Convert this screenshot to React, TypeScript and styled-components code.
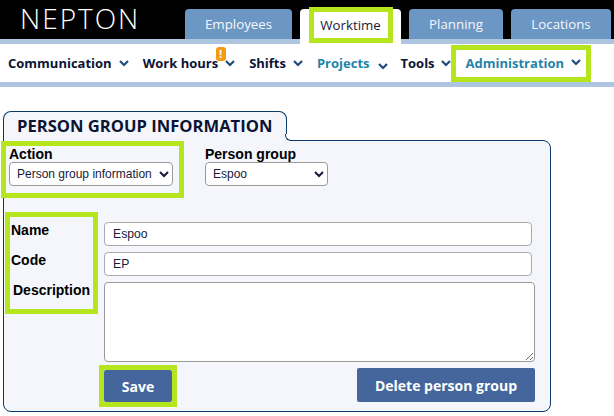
import React from "react";
import styled, { createGlobalStyle } from "styled-components";

const LIME = "#b5e61d";
const PANEL_BG = "#f4f6fb";

const GlobalStyle = createGlobalStyle`
	html, body {
		margin: 0;
		padding: 0;
		background: #fff;
	}
	* {
		box-sizing: border-box;
	}
`;

const Chevron = ({ $drop }: { $drop?: number }) => (
	<ChevronIcon $drop={$drop} viewBox="0 0 10 7" width="10" height="7">
		<polyline points="1,1 5,5 9,1" fill="none" stroke="#1f4b7f" strokeWidth="2.2" />
	</ChevronIcon>
);

const App = () => {
	return (
		<Page>
			<GlobalStyle />
			<Header>
				<Logo>NEPTON</Logo>
				<Tabs>
					<Tab $width={107}>Employees</Tab>
					<ActiveTab>
						<ActiveTabMark>Worktime</ActiveTabMark>
					</ActiveTab>
					<Tab $width={94}>Planning</Tab>
					<Tab $width={100}>Locations</Tab>
				</Tabs>
			</Header>
			<Band />
			<Menu>
				<MenuItem $left={8} $gap={7}>
					Communication
					<Chevron />
				</MenuItem>
				<MenuItem $left={14} $gap={7}>
					Work hours
					<Badge>!</Badge>
					<Chevron />
				</MenuItem>
				<MenuItem $left={14} $gap={7}>
					Shifts
					<Chevron />
				</MenuItem>
				<MenuItem $left={14} $gap={8} $accent>
					Projects
					<Chevron $drop={3} />
				</MenuItem>
				<MenuItem $left={13} $gap={6}>
					Tools
					<Chevron />
				</MenuItem>
				<AdminMark>
					<MenuItem $left={0} $gap={7} $accent>
						Administration
						<Chevron />
					</MenuItem>
				</AdminMark>
			</Menu>
			<Band />
			<Content>
				<PanelTab>PERSON GROUP INFORMATION</PanelTab>
				<Panel>
					<TopRow>
						<ActionMark>
							<FieldLabel>Action</FieldLabel>
							<Select $width={164} defaultValue="info">
								<option value="info">Person group information</option>
							</Select>
						</ActionMark>
						<GroupField>
							<FieldLabel>Person group</FieldLabel>
							<Select $width={123} defaultValue="espoo">
								<option value="espoo">Espoo</option>
							</Select>
						</GroupField>
					</TopRow>
					<FormGrid>
						<LabelMark>
							<FormLabel>Name</FormLabel>
							<FormLabel>Code</FormLabel>
							<FormLabel $indent={2}>Description</FormLabel>
						</LabelMark>
						<Fields>
							<TextInput defaultValue="Espoo" />
							<TextInput defaultValue="EP" />
							<TextArea />
						</Fields>
						<Actions>
							<SaveMark>
								<Button $width={68} $height={32}>
									Save
								</Button>
							</SaveMark>
							<Button $width={178} $height={34} $top={3}>
								Delete person group
							</Button>
						</Actions>
					</FormGrid>
				</Panel>
			</Content>
		</Page>
	);
};

export default App;

const Page = styled.div`
	width: 614px;
	height: 416px;
	overflow: hidden;
	font-family: "Liberation Sans", Arial, sans-serif;
`;

const Header = styled.div`
	position: relative;
	z-index: 1;
	display: flex;
	align-items: flex-end;
	height: 39px;
	background: #000;
`;

const Logo = styled.div`
	align-self: flex-start;
	width: 185px;
	padding-left: 20px;
	font-family: "Open Sans", sans-serif;
	font-weight: 300;
	font-size: 28px;
	line-height: 37px;
	letter-spacing: 2px;
	color: #fff;
`;

const Tabs = styled.div`
	display: flex;
	align-items: flex-end;
	gap: 8px;
`;

const Tab = styled.div<{ $width: number }>`
	display: flex;
	align-items: center;
	justify-content: center;
	width: ${(p) => p.$width}px;
	height: 30px;
	border-radius: 4px 4px 0 0;
	background: #6c96c3;
	color: #f4f8fc;
	font-family: "Open Sans", sans-serif;
	font-size: 13.3px;
`;

const ActiveTab = styled.div`
	display: flex;
	justify-content: center;
	width: 101px;
	height: 35px;
	margin-bottom: -5px;
	border-radius: 4px 4px 0 0;
	background: #fff;
`;

const ActiveTabMark = styled.div`
	display: flex;
	align-items: center;
	justify-content: center;
	width: 84px;
	height: 36px;
	margin-top: -2px;
	border: 5px solid ${LIME};
	color: #1a1a3a;
	font-family: "Open Sans", sans-serif;
	font-size: 13.3px;
`;

const Band = styled.div`
	height: 5px;
	background: #aec5df;
`;

const Menu = styled.div`
	display: flex;
	align-items: center;
	height: 38px;
	background: #fff;
`;

const MenuItem = styled.div<{ $left: number; $gap: number; $accent?: boolean }>`
	position: relative;
	display: flex;
	align-items: center;
	gap: ${(p) => p.$gap}px;
	margin-left: ${(p) => p.$left}px;
	font-family: "Open Sans", sans-serif;
	font-weight: 700;
	font-size: 13px;
	white-space: nowrap;
	color: ${(p) => (p.$accent ? "#1f84a8" : "#0b1433")};
`;

const ChevronIcon = styled.svg<{ $drop?: number }>`
	flex: none;
	margin-top: ${(p) => (p.$drop ? p.$drop * 2 : 0)}px;
`;

const Badge = styled.span`
	position: absolute;
	left: 73px;
	top: -7px;
	width: 10px;
	height: 14px;
	border-radius: 3px;
	background: #f59a13;
	color: #fff;
	font-size: 11px;
	font-weight: 700;
	line-height: 14px;
	text-align: center;
`;

const AdminMark = styled.div`
	display: flex;
	align-items: center;
	width: 140px;
	height: 37px;
	margin-top: 1px;
	padding: 0 0 2px 10px;
	border: 5px solid ${LIME};
`;

const Content = styled.div`
	padding: 24px 0 0 3px;
`;

const PanelTab = styled.div`
	position: relative;
	z-index: 1;
	width: 284px;
	height: 30px;
	margin-bottom: -1px;
	padding: 4px 0 0 13px;
	border: 1px solid #0b3a68;
	border-bottom: none;
	border-radius: 8px 8px 0 0;
	background: ${PANEL_BG};
	color: #0b1433;
	font-family: "Open Sans", sans-serif;
	font-weight: 700;
	font-size: 16.6px;
	line-height: 20px;
	white-space: nowrap;

	&::after {
		content: "";
		position: absolute;
		right: -7px;
		bottom: 0;
		width: 7px;
		height: 6px;
		border-left: 1px solid #0b3a68;
		border-bottom: 1px solid #0b3a68;
		border-radius: 0 0 0 6px;
		background: #fff;
		box-shadow: -3px 3px 0 ${PANEL_BG};
	}
`;

const Panel = styled.div`
	width: 548px;
	height: 272px;
	border: 1px solid #0b3a68;
	border-radius: 0 8px 8px 8px;
	background: ${PANEL_BG};
`;

const TopRow = styled.div`
	display: flex;
	align-items: flex-start;
	margin-left: -3px;
`;

const ActionMark = styled.div`
	position: relative;
	z-index: 2;
	width: 183px;
	height: 57px;
	padding-left: 3px;
	border: 5px solid ${LIME};
`;

const GroupField = styled.div`
	margin-left: 21px;
	padding-top: 5px;
`;

const FieldLabel = styled.div`
	height: 16px;
	font-weight: 700;
	font-size: 14px;
	line-height: 16px;
	color: #000;
`;

const Select = styled.select<{ $width: number }>`
	display: block;
	width: ${(p) => p.$width}px;
	height: 24px;
	border: 1px solid #999;
	border-radius: 4px;
	background: #fff;
	color: #1a1a3a;
	padding-left: 3px;
	font-family: "Liberation Sans", Arial, sans-serif;
	font-size: 12px;
`;

const FormGrid = styled.div`
	display: grid;
	grid-template-columns: 100px 431px;
	margin-top: 14px;
`;

const LabelMark = styled.div`
	position: relative;
	z-index: 2;
	width: 93px;
	height: 102px;
	margin-left: 1px;
	padding-top: 5px;
	border: 5px solid ${LIME};
`;

const FormLabel = styled.div<{ $indent?: number }>`
	height: 30px;
	margin-left: ${(p) => p.$indent ?? 0}px;
	padding-left: 1px;
	font-weight: 700;
	font-size: 14px;
	line-height: 16px;
	color: #000;
`;

const Fields = styled.div`
	display: flex;
	flex-direction: column;
	align-items: flex-start;
	gap: 6px;
	padding-top: 10px;
`;

const TextInput = styled.input`
	width: 428px;
	height: 24px;
	padding: 0 8px;
	border: 1px solid #aaa;
	border-radius: 4px;
	background: #fff;
	color: #1a1a3a;
	font-family: "Liberation Sans", Arial, sans-serif;
	font-size: 12.2px;
	outline: none;
`;

const TextArea = styled.textarea`
	display: block;
	width: 431px;
	height: 80px;
	border: 1px solid #999;
	border-radius: 4px;
	background: #fff;
`;

const Actions = styled.div`
	grid-column: 2;
	display: flex;
	align-items: flex-start;
	justify-content: space-between;
	margin-left: -5px;
	padding-top: 3px;
`;

const SaveMark = styled.div`
	width: 78px;
	height: 42px;
	border: 5px solid ${LIME};
`;

const Button = styled.button<{ $width: number; $height: number; $top?: number }>`
	display: block;
	width: ${(p) => p.$width}px;
	height: ${(p) => p.$height}px;
	margin-top: ${(p) => p.$top ?? 0}px;
	padding: 0;
	border: none;
	border-radius: 2px;
	background: #44669c;
	color: #fff;
	font-family: "Open Sans", sans-serif;
	font-weight: 700;
	font-size: 14px;
`;
